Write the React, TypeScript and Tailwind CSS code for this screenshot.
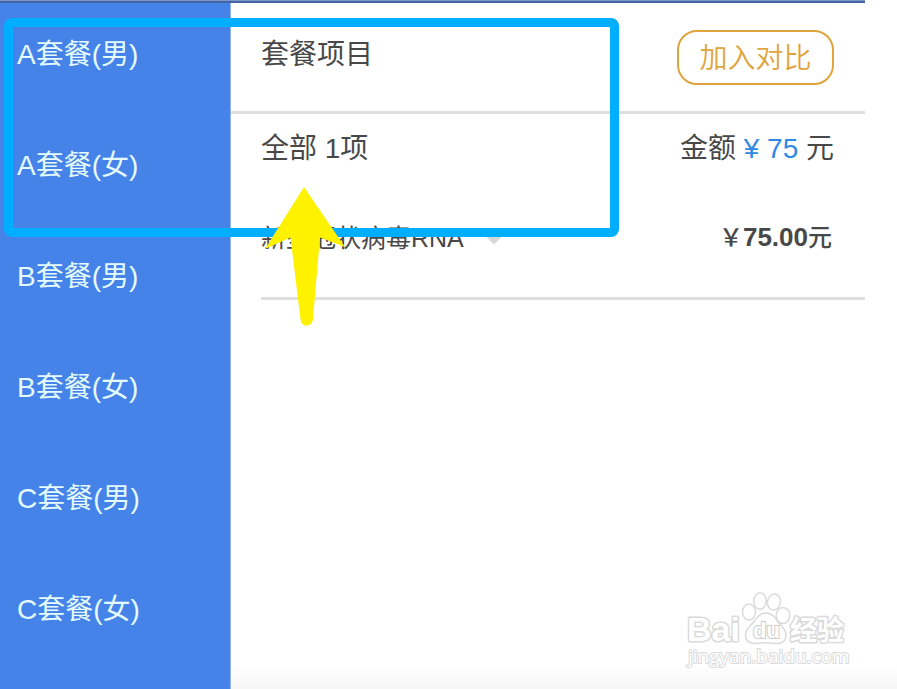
import { useState } from "react";

const PACKAGES = ["A套餐(男)", "A套餐(女)", "B套餐(男)", "B套餐(女)", "C套餐(男)", "C套餐(女)"];

export default function App() {
  const [expanded, setExpanded] = useState(false);

  return (
    <div className="relative min-h-screen bg-white pr-8 font-['Liberation_Sans','Noto_Sans_CJK_SC',sans-serif] text-[28px] leading-10 text-[#484848]">
      <div className="flex min-h-screen flex-col">
        <div className="h-[3px] border-t border-[#7f97c4] bg-[#4565ab]" />
        <div className="flex flex-1">
          <Sidebar />
          <main className="flex min-w-0 flex-1 flex-col">
            <header className="flex h-[111px] items-start justify-between border-b-[3px] border-[#dfdfdf] pr-[31px] pl-[30px]">
              <h1 className="pt-8">套餐项目</h1>
              <button
                type="button"
                className="mt-[27px] h-[55px] w-[157px] rounded-[20px] border-2 border-[#dfa53c] pt-[2px] font-[350] text-[#dfa53c]"
              >
                加入对比
              </button>
            </header>
            <section className="ml-[30px] border-b-[3px] border-[#dfdfdf] pt-[15px] pr-[31px] pb-[39px]">
              <div className="flex justify-between">
                <p>全部 1项</p>
                <p>
                  金额 <span className="text-[#3089e3]">¥ 75</span> 元
                </p>
              </div>
              <div className="flex justify-between pt-12">
                <button
                  type="button"
                  aria-expanded={expanded}
                  onClick={() => setExpanded(!expanded)}
                  className="flex items-center gap-[18px] text-[25px]"
                >
                  新型冠状病毒RNA
                  <svg className="h-5 w-6" viewBox="0 0 24 20" fill="none" stroke="#d8d8d8" strokeWidth="5">
                    <path d="M4 5l8 8 8-8" />
                  </svg>
                </button>
                <p className="pr-[2px] text-[26px] font-bold">
                  <span className="text-[24px] font-medium">￥</span>75.00
                  <span className="text-[24px] font-medium">元</span>
                </p>
              </div>
            </section>
            <div className="flex-1" />
          </main>
        </div>
      </div>
      <div className="absolute right-0 bottom-0 left-[231px] h-6 bg-linear-to-b from-white to-[#f6f6f6]" />
      <Watermark />
      <Annotation />
    </div>
  );
}

function Sidebar() {
  return (
    <nav className="w-[231px] shrink-0 border-r border-[#8fb4ee] bg-[#4683e8] pt-8 pl-[17px] text-[#e4fbff]">
      <ul>
        {PACKAGES.map((name) => (
          <li key={name} className="h-[111px] last:h-10">
            <a href="#">{name}</a>
          </li>
        ))}
      </ul>
    </nav>
  );
}

function Watermark() {
  return (
    <svg
      className="absolute right-[47px] bottom-[17px] h-[86px] w-[170px]"
      viewBox="0 0 170 86"
      fill="#fff"
      stroke="#dadada"
      strokeWidth="1.5"
    >
      <g strokeWidth="3" strokeLinejoin="round" paintOrder="stroke" fontWeight="700">
        <text x="7" y="55" fontSize="34" fontFamily="Liberation Sans, sans-serif">Bai</text>
        <text x="110" y="54" fontSize="27" fontFamily="Noto Sans CJK SC, sans-serif">经验</text>
      </g>
      <ellipse cx="69" cy="26" rx="6.5" ry="8" />
      <ellipse cx="80" cy="15" rx="6.2" ry="8.3" />
      <ellipse cx="94" cy="16" rx="6.5" ry="8" transform="rotate(12 94 16)" />
      <ellipse cx="103" cy="29.5" rx="6.8" ry="8" />
      <path d="M86 27C81 27 77.500 30 74.500 35C71 40 65.500 42 65.500 49C65.500 55 70 58 76 57.500C82 56.500 90 56.500 96 57.500C102 58 106 55 106 49C106 42 100.500 40 97.500 35C94.500 30 91 27 86 27Z" />
      <g strokeWidth="2" paintOrder="stroke">
        <text x="73" y="52" fontSize="22" fontWeight="700" fontFamily="Liberation Sans, sans-serif" stroke="#cccccc">du</text>
        <text x="8" y="77" fontSize="19" fontFamily="Open Sans, sans-serif">jingyan.baidu.com</text>
      </g>
    </svg>
  );
}

/** 标注框和箭头 */
function Annotation() {
  return (
    <>
      <div className="pointer-events-none absolute top-[18px] left-1 h-[219px] w-[615px] rounded-lg border-[9px] border-[#00aeff]" />
      <svg
        className="pointer-events-none absolute top-[187px] left-[265px] h-[140px] w-20"
        viewBox="0 0 80 140"
        fill="#fff200"
      >
        <path d="M39 0L80 60L55 50.500L48 132C47 141 36 141 35.500 132L25.500 50.500L0 62Z" />
      </svg>
    </>
  );
}
